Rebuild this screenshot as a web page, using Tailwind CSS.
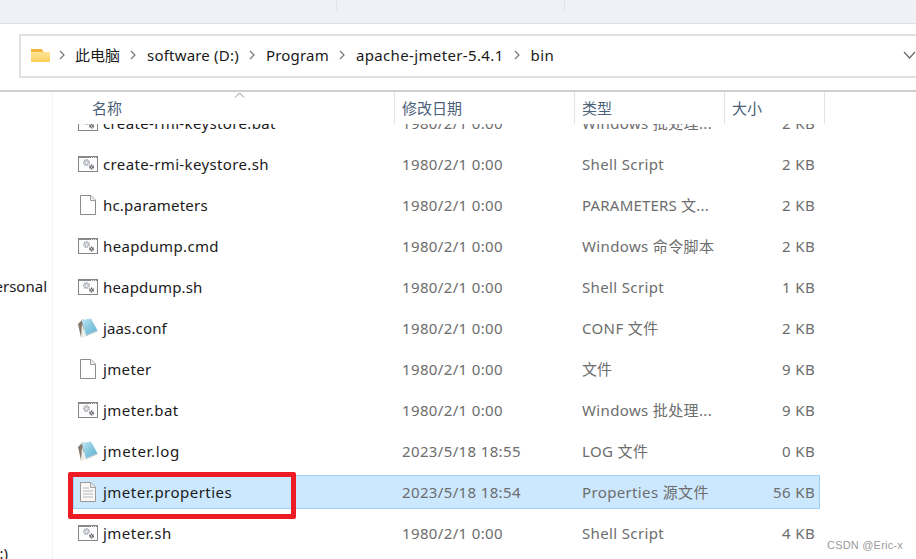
<!DOCTYPE html>
<html lang="zh"><head><meta charset="utf-8"><script src="https://cdn.jsdelivr.net/npm/@tailwindcss/browser@4"></script><title>bin</title></head>
<body class="m-0 bg-white">
<svg width="0" height="0" class="absolute">
<defs>
<linearGradient id="cover" x1="0" y1="0" x2="1" y2="1"><stop offset="0" stop-color="#c5e8f3"/><stop offset="0.5" stop-color="#86c8e0"/><stop offset="1" stop-color="#62b2d2"/></linearGradient>
<linearGradient id="fold" x1="0" y1="0" x2="0" y2="1"><stop offset="0" stop-color="#fde69a"/><stop offset="1" stop-color="#fbcf58"/></linearGradient>
<symbol id="gear" viewBox="0 0 20 16">
<rect x="0.5" y="0.5" width="19" height="15" fill="#fdfdfd" stroke="#858585"/>
<rect x="1" y="1" width="18" height="1" fill="#8a8a8a"/>
<rect x="13" y="1" width="1" height="1" fill="#e8e8e8"/><rect x="15" y="1" width="1" height="1" fill="#e8e8e8"/><rect x="17" y="1" width="1" height="1" fill="#e8e8e8"/>
<circle cx="8.500" cy="6.500" r="2.200" fill="none" stroke="#aab0b8" stroke-width="2.600" stroke-dasharray="1.300 0.500"/>
<circle cx="13.500" cy="11" r="1.500" fill="none" stroke="#565a60" stroke-width="2" stroke-dasharray="1 0.450"/>
</symbol>
<symbol id="file" viewBox="0 0 16 20">
<path d="M0.500 0.500H11L15.500 5V19.500H0.500Z" fill="#fff" stroke="#8a8a8a"/>
<path d="M10.500 0.500V5.500H15.500" fill="#f0f0f0" stroke="#9a9a9a"/>
</symbol>
<symbol id="note" viewBox="0 0 20 20">
<path d="M0 6L5 1L6.500 18L3 19.500Z" fill="#85786a"/>
<path d="M3 19.500L4 6L8 18Z" fill="#efefea"/>
<path d="M3.500 2L13 0.500L19.500 12.500L8 17.500Z" fill="url(#cover)"/>
<path d="M8 17.500L19.500 12.500V13.500L8 18.500Z" fill="#c9c9c4"/>
</symbol>
<symbol id="prop" viewBox="0 0 16 20">
<path d="M0.500 0.500H11L15.500 5V19.500H0.500Z" fill="#f8f8f8" stroke="#9a9a9a"/>
<path d="M10.500 0.500V5.500H15.500" fill="#e8e8e8" stroke="#a5a5a5"/>
<path d="M3 6H9M3 9H13M3 12H13M3 15H13" stroke="#b8b8b8"/>
</symbol>
</defs>
</svg>
<div class="relative w-[916px] h-[559px] overflow-hidden flex flex-col font-['Noto_Sans','Noto_Sans_CJK_SC',sans-serif] text-[15px] tracking-[0.36px]">
  <div class="h-6 shrink-0 bg-[#f0f1f6] border-b border-[#dfdfdf] flex">
    <div class="w-[337px] h-[10px] border-r border-[#e2e2e6]"></div>
    <div class="w-[228px] h-[10px] border-r border-[#e2e2e6]"></div>
  </div>
  <div class="h-[68px] shrink-0 border-b-2 border-[#cfcfcf] pt-[10px] pl-[19px]">
    <div class="h-[44px] -mr-1 border-2 border-r-0 border-[#e0e0e0] flex items-center pl-[10px] pb-[2px] text-[#1a1a1a]">
      <svg width="19" height="15" viewBox="0 0 19 15" class="mr-[9px] mt-[1px]"><path d="M0 1H11L12.500 4H0Z" fill="#f5b83a"/><path d="M0 4H19V14H0Z" fill="url(#fold)"/></svg>
      <svg width="6" height="10" viewBox="0 0 6 10" class="mr-[10px]"><path d="M1 1L5 5L1 9" fill="none" stroke="#777" stroke-width="1.200"/></svg>
      <span class="tracking-normal">此电脑</span>
      <svg width="6" height="10" viewBox="0 0 6 10" class="ml-[10px] mr-[11px]"><path d="M1 1L5 5L1 9" fill="none" stroke="#777" stroke-width="1.200"/></svg>
      <span class="tracking-[0.2px]">software (D:)</span>
      <svg width="6" height="10" viewBox="0 0 6 10" class="ml-[10px] mr-[11px]"><path d="M1 1L5 5L1 9" fill="none" stroke="#777" stroke-width="1.200"/></svg>
      <span class="tracking-[0.2px]">Program</span>
      <svg width="6" height="10" viewBox="0 0 6 10" class="ml-[10px] mr-[11px]"><path d="M1 1L5 5L1 9" fill="none" stroke="#777" stroke-width="1.200"/></svg>
      <span>apache-jmeter-5.4.1</span>
      <svg width="6" height="10" viewBox="0 0 6 10" class="ml-[10px] mr-[11px]"><path d="M1 1L5 5L1 9" fill="none" stroke="#777" stroke-width="1.200"/></svg>
      <span>bin</span>
      <svg width="13" height="8" viewBox="0 0 13 8" class="ml-auto mr-[4px]"><path d="M1 1L6.500 7L12 1" fill="none" stroke="#666" stroke-width="1.200"/></svg>
    </div>
  </div>
  <div class="flex flex-1 min-h-0">
    <div class="w-[53px] shrink-0 border-r border-[#f2f2f2] flex flex-col items-end overflow-hidden text-[#1a1a1a] whitespace-nowrap tracking-normal">
      <div class="mt-[182px] h-[24px] leading-[24px] mr-[5px]">Personal</div>
      <div class="mt-[243px] h-[24px] leading-[24px] mr-[44px]">(D:)</div>
    </div>
    <div class="flex-1 min-w-0 flex flex-col">
      <div class="h-[32px] shrink-0 flex text-[#4c607a] relative tracking-normal">
        <div class="w-[342px] h-full border-r border-[#e3e3e3] pl-[39px] pt-[5px]">名称</div>
        <div class="w-[180px] h-full border-r border-[#e3e3e3] pl-[7px] pt-[5px]">修改日期</div>
        <div class="w-[150px] h-full border-r border-[#e3e3e3] pl-[7px] pt-[5px]">类型</div>
        <div class="w-[100px] h-full border-r border-[#e3e3e3] pl-[7px] pt-[5px]">大小</div>
        <svg width="11" height="6" viewBox="0 0 11 6" class="absolute left-[181px] top-[0px]"><path d="M1 5.500L5.500 1L10 5.500" fill="none" stroke="#8a8a8a"/></svg>
      </div>
      <div class="flex-1 min-h-0 overflow-hidden text-[#6d6d6d]">
        <div class="-mt-[18px] flex flex-col gap-[7px] pl-[20px] w-[767px]">
          <div class="h-[34px] flex items-center border border-transparent"><svg width="20" height="16" class="ml-[4px] mr-[5px]"><use href="#gear"/></svg><span class="w-[299px] text-[#1a1a1a]">create-rmi-keystore.bat</span><span class="w-[180px]">1980/2/1 0:00</span><span class="w-[170px]">Windows 批处理...</span><span class="w-[63px] text-right">2 KB</span></div>
          <div class="h-[34px] flex items-center border border-transparent"><svg width="20" height="16" class="ml-[4px] mr-[5px]"><use href="#gear"/></svg><span class="w-[299px] text-[#1a1a1a]">create-rmi-keystore.sh</span><span class="w-[180px]">1980/2/1 0:00</span><span class="w-[170px]">Shell Script</span><span class="w-[63px] text-right">2 KB</span></div>
          <div class="h-[34px] flex items-center border border-transparent"><svg width="16" height="20" class="ml-[6px] mr-[7px]"><use href="#file"/></svg><span class="w-[299px] text-[#1a1a1a] tracking-[0.2px]">hc.parameters</span><span class="w-[180px]">1980/2/1 0:00</span><span class="w-[170px] tracking-[0.2px]">PARAMETERS 文...</span><span class="w-[63px] text-right">2 KB</span></div>
          <div class="h-[34px] flex items-center border border-transparent"><svg width="20" height="16" class="ml-[4px] mr-[5px]"><use href="#gear"/></svg><span class="w-[299px] text-[#1a1a1a]">heapdump.cmd</span><span class="w-[180px]">1980/2/1 0:00</span><span class="w-[170px]">Windows 命令脚本</span><span class="w-[63px] text-right">2 KB</span></div>
          <div class="h-[34px] flex items-center border border-transparent"><svg width="20" height="16" class="ml-[4px] mr-[5px]"><use href="#gear"/></svg><span class="w-[299px] text-[#1a1a1a] tracking-[0.18px]">heapdump.sh</span><span class="w-[180px]">1980/2/1 0:00</span><span class="w-[170px]">Shell Script</span><span class="w-[63px] text-right">1 KB</span></div>
          <div class="h-[34px] flex items-center border border-transparent"><svg width="20" height="20" class="ml-[4px] mr-[5px]"><use href="#note"/></svg><span class="w-[299px] text-[#1a1a1a] tracking-[0.14px]">jaas.conf</span><span class="w-[180px]">1980/2/1 0:00</span><span class="w-[170px]">CONF 文件</span><span class="w-[63px] text-right">2 KB</span></div>
          <div class="h-[34px] flex items-center border border-transparent"><svg width="16" height="20" class="ml-[6px] mr-[7px]"><use href="#file"/></svg><span class="w-[299px] text-[#1a1a1a]">jmeter</span><span class="w-[180px]">1980/2/1 0:00</span><span class="w-[170px] tracking-normal">文件</span><span class="w-[63px] text-right">9 KB</span></div>
          <div class="h-[34px] flex items-center border border-transparent"><svg width="20" height="16" class="ml-[4px] mr-[5px]"><use href="#gear"/></svg><span class="w-[299px] text-[#1a1a1a] tracking-[0.46px]">jmeter.bat</span><span class="w-[180px]">1980/2/1 0:00</span><span class="w-[170px]">Windows 批处理...</span><span class="w-[63px] text-right">9 KB</span></div>
          <div class="h-[34px] flex items-center border border-transparent"><svg width="20" height="20" class="ml-[4px] mr-[5px]"><use href="#note"/></svg><span class="w-[299px] text-[#1a1a1a] tracking-[0.66px]">jmeter.log</span><span class="w-[180px]">2023/5/18 18:55</span><span class="w-[170px]">LOG 文件</span><span class="w-[63px] text-right">0 KB</span></div>
          <div class="h-[34px] flex items-center border border-[#99d1ff] bg-[#cce8ff]"><svg width="16" height="20" class="ml-[6px] mr-[7px]"><use href="#prop"/></svg><span class="w-[299px] text-[#1a1a1a] tracking-[0.48px]">jmeter.properties</span><span class="w-[180px]">2023/5/18 18:54</span><span class="w-[170px]">Properties 源文件</span><span class="w-[63px] text-right">56 KB</span></div>
          <div class="h-[34px] flex items-center border border-transparent"><svg width="20" height="16" class="ml-[4px] mr-[5px]"><use href="#gear"/></svg><span class="w-[299px] text-[#1a1a1a] tracking-[0.47px]">jmeter.sh</span><span class="w-[180px]">1980/2/1 0:00</span><span class="w-[170px]">Shell Script</span><span class="w-[63px] text-right">4 KB</span></div>
        </div>
      </div>
    </div>
  </div>
  <div class="absolute left-[68px] top-[472px] w-[228px] h-[47px] border-[5px] border-[#ed1c24] rounded-[2px]"></div>
  <div class="absolute left-[827px] top-[538px] text-[11px] leading-[15px] text-[#9a9a9a] font-['Liberation_Sans',sans-serif] tracking-[0.2px] bg-white/70">CSDN @Eric-x</div>
</div>
</body></html>
